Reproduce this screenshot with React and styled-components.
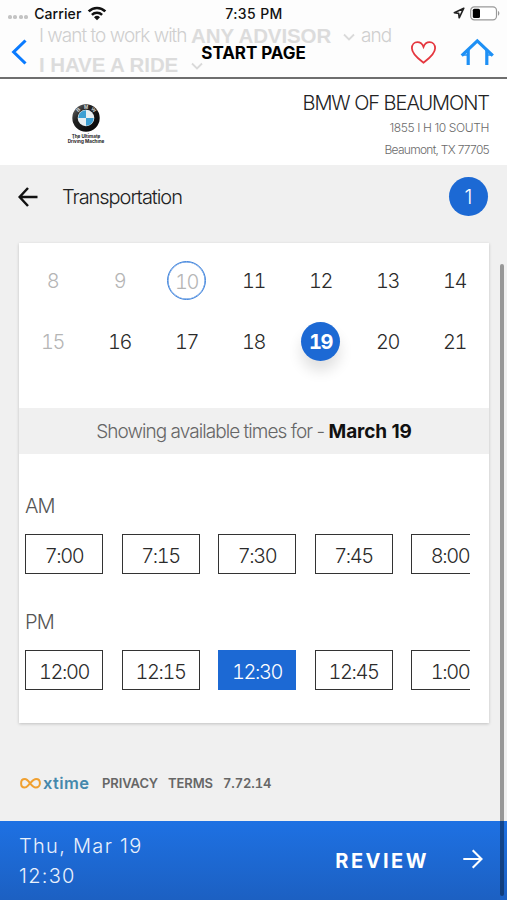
import styled, { createGlobalStyle, css } from "styled-components";

const days = [
  { day: 8, disabled: true },
  { day: 9, disabled: true },
  { day: 10, disabled: true, today: true },
  { day: 11 },
  { day: 12 },
  { day: 13 },
  { day: 14 },
  { day: 15, disabled: true },
  { day: 16 },
  { day: 17 },
  { day: 18 },
  { day: 19, selected: true },
  { day: 20 },
  { day: 21 },
];

const slots = [
  { label: "AM", times: ["7:00", "7:15", "7:30", "7:45", "8:00"] },
  { label: "PM", times: ["12:00", "12:15", "12:30", "12:45", "1:00"] },
];

const selectedTime = "12:30";

export default function App() {
  return (
    <Screen>
      <GlobalStyle />
      <TopBar>
        <Ghost aria-hidden="true">
          <GhostLine>
            <GhostText $width={148}>I want to work with</GhostText>
            <GhostStrong $width={141}>ANY ADVISOR</GhostStrong>
            <Chevron />
            <GhostText $width={30}>and</GhostText>
          </GhostLine>
          <GhostLine>
            <GhostStrong $width={141}>I HAVE A RIDE</GhostStrong>
            <Chevron />
          </GhostLine>
        </Ghost>
        <StatusBar>
          <Carrier>
            <SignalDots>
              <i />
              <i />
              <i />
              <i />
            </SignalDots>
            <span>Carrier</span>
            <WifiIcon />
          </Carrier>
          <Clock>7:35 PM</Clock>
          <StatusRight>
            <LocationIcon />
            <BatteryIcon />
          </StatusRight>
        </StatusBar>
        <NavRow>
          <BackIcon />
          <NavTitle>START PAGE</NavTitle>
          <NavActions>
            <HeartIcon />
            <HomeIcon />
          </NavActions>
        </NavRow>
      </TopBar>

      <Dealer>
        <Brand>
          <BrandLogo />
          <Slogan>
            The Ultimate
            <br />
            Driving Machine
          </Slogan>
        </Brand>
        <DealerInfo>
          <DealerName>BMW OF BEAUMONT</DealerName>
          <Address>1855 I H 10 SOUTH</Address>
          <Address>Beaumont, TX 77705</Address>
        </DealerInfo>
      </Dealer>

      <Content>
        <StepRow>
          <ArrowIcon />
          <StepTitle>Transportation</StepTitle>
          <StepBadge>1</StepBadge>
        </StepRow>
        <Card>
          <Calendar>
            {days.map(({ day, ...state }) => (
              <DayCell key={day}>
                <Day
                  $disabled={state.disabled}
                  $today={state.today}
                  $selected={state.selected}
                >
                  {day}
                </Day>
              </DayCell>
            ))}
          </Calendar>
          <Showing>
            <ShowingText>Showing available times for - </ShowingText>
            <b>March 19</b>
          </Showing>
          <Slots>
            {slots.map(({ label, times }) => (
              <SlotGroup key={label}>
                <SlotLabel>{label}</SlotLabel>
                <SlotList>
                  {times.map((time) => (
                    <Slot key={time} $selected={time === selectedTime}>
                      {time}
                    </Slot>
                  ))}
                </SlotList>
              </SlotGroup>
            ))}
          </Slots>
        </Card>
        <Footer>
          <XtimeLogo>
            <LoopIcon />
            <span>xtime</span>
          </XtimeLogo>
          <FooterText>PRIVACY</FooterText>
          <FooterText>TERMS</FooterText>
          <FooterText>7.72.14</FooterText>
        </Footer>
      </Content>

      <BottomBar>
        <Summary>
          <div>Thu, Mar 19</div>
          <div>12:30</div>
        </Summary>
        <Review>REVIEW</Review>
        <NextIcon />
      </BottomBar>
      <ScrollThumb />
    </Screen>
  );
}

function Chevron() {
  return (
    <svg width="14" height="10" viewBox="0 0 14 10" fill="none">
      <path d="M2 2.5 7 7.5 12 2.5" stroke="#dadada" strokeWidth="1.8" />
    </svg>
  );
}

function WifiIcon() {
  return (
    <svg width="20" height="15" viewBox="0 0 20 15" fill="none" stroke="#111">
      <path d="M1.7 5.4a11.8 11.8 0 0 1 16.6 0" strokeWidth="2.7" />
      <path d="M4.9 8.8a7.3 7.3 0 0 1 10.2 0" strokeWidth="2.5" />
      <path d="M7 11.2a4.3 4.3 0 0 1 6 0L10 14.3z" fill="#111" stroke="none" />
    </svg>
  );
}

function LocationIcon() {
  return (
    <svg width="12" height="12" viewBox="0 0 12 12" fill="none">
      <path
        d="M10.8 1.2 1.3 5.7l4.4.7.5 4.4z"
        stroke="#222"
        strokeWidth="1.6"
        strokeLinejoin="round"
      />
    </svg>
  );
}

function BatteryIcon() {
  return (
    <svg width="30" height="15" viewBox="0 0 30 15">
      <rect x=".7" y=".9" width="25.8" height="12.9" rx="3.6" fill="#fff" stroke="#999" strokeWidth="1.2" />
      <rect x="2.8" y="2.8" width="7.2" height="9.2" rx="1.5" fill="#000" />
      <path d="M28 5.1c1.8.7 1.8 4 0 4.7z" fill="#999" />
    </svg>
  );
}

function BackIcon() {
  return (
    <svg width="16" height="26" viewBox="0 0 16 26" fill="none">
      <path d="M14.5 1.5 2.7 13l11.8 11.5" stroke="#0a7bff" strokeWidth="3.1" />
    </svg>
  );
}

function HeartIcon() {
  return (
    <svg width="26" height="23" viewBox="0 0 26 23" fill="none">
      <path
        d="M13.5 21.7C9.9 18.9 1.9 13.5 1.9 7.3c0-3.7 2.5-6.1 5.5-6.1 2.9 0 5 1.8 6.1 4.6 1.1-2.8 3.2-4.6 6.1-4.6 3 0 5.5 2.4 5.5 6.1 0 6.2-8 11.6-11.6 14.4z"
        stroke="#e5373f"
        strokeWidth="1.8"
      />
    </svg>
  );
}

function HomeIcon() {
  return (
    <svg width="34" height="28" viewBox="0 0 34 28" fill="none" stroke="#1e90f5">
      <path d="M1.7 17.7 17.3 2.9l15.500 14.800" strokeWidth="3.2" />
      <path d="M8.200 12v15M26.800 12v15" strokeWidth="3.2" />
      <path d="M3 17h5M26.500 17h5" strokeWidth="1.500" />
    </svg>
  );
}

function BrandLogo() {
  return (
    <svg width="28" height="28" viewBox="0 0 28 28">
      <defs>
        <linearGradient id="rim" x1="0" y1="0" x2="1" y2="1">
          <stop offset="0" stopColor="#777" />
          <stop offset=".35" stopColor="#222" />
          <stop offset="1" stopColor="#000" />
        </linearGradient>
      </defs>
      <circle cx="14" cy="14" r="13.7" fill="url(#rim)" />
      <circle cx="14" cy="14" r="8.3" fill="#e9eff2" />
      <path d="M14 14V6.3A7.7 7.7 0 0 0 6.3 14z" fill="#3d9fd3" />
      <path d="M14 14v7.7a7.7 7.7 0 0 0 7.7-7.7z" fill="#3d9fd3" />
      <g fill="#ddd" fontFamily="Liberation Sans, sans-serif" fontSize="5" fontWeight="700" textAnchor="middle">
        <text x="6.5" y="7.5" transform="rotate(-40 6.5 6)">B</text>
        <text x="14" y="4.9">M</text>
        <text x="21.5" y="7.5" transform="rotate(40 21.5 6)">W</text>
      </g>
    </svg>
  );
}

function ArrowIcon() {
  return (
    <svg width="20" height="20" viewBox="0 0 20 20" fill="none" stroke="#111">
      <path d="M10 1 1.6 10l8.400 9M1.800 10h17.700" strokeWidth="2.500" />
    </svg>
  );
}

function NextIcon() {
  return (
    <svg width="20" height="20" viewBox="0 0 20 20" fill="none" stroke="#fff">
      <path d="M9.7 1.2 18.5 10l-8.8 8.8M18.3 10H.3" strokeWidth="2.1" />
    </svg>
  );
}

function LoopIcon() {
  return (
    <svg width="21" height="12" viewBox="0 0 21 12" fill="none">
      <path
        d="M11 5.2 8 8.6C6.600 10.200 5.600 10.600 4.600 10.600 2.500 10.600 1.100 8.700 1.100 6.300 1.100 3.900 2.600 2.100 4.900 2.100c4.100 0 6.200 8.500 10.800 8.500 2.500 0 4.200-1.900 4.200-4.300 0-2.500-1.600-4.200-3.800-4.200-1.900 0-3.100 1-5.100 3.300"
        stroke="#f0a030"
        strokeWidth="2"
      />
    </svg>
  );
}

const GlobalStyle = createGlobalStyle`
  * {
    box-sizing: border-box;
  }
  body {
    margin: 0;
    background: #f0f0f0;
    font-family: Inter, "Liberation Sans", sans-serif;
    color: #333;
  }
  svg {
    display: block;
    flex-shrink: 0;
  }
`;

const Screen = styled.div`
  position: relative;
  display: flex;
  flex-direction: column;
  width: 507px;
  height: 900px;
  overflow: hidden;
`;

const TopBar = styled.header`
  position: relative;
  height: 79px;
  background: #fdfdfd;
  border-bottom: 2px solid #6e6e6e;
`;

/* page content showing through the translucent bar */
const Ghost = styled.div`
  position: absolute;
  top: 21px;
  left: 39px;
  color: #cfcfcf;
`;

const GhostLine = styled.div`
  display: flex;
  align-items: center;
  height: 29px;
  svg {
    margin: 2px 5px 0 10px;
  }
`;

const GhostText = styled.span`
  width: ${({ $width }) => $width}px;
  margin-right: 4px;
  font-size: 19px;
  font-weight: 300;
  letter-spacing: -0.98px;
  white-space: nowrap;
`;

const GhostStrong = styled.span`
  width: ${({ $width }) => $width}px;
  font-family: "Liberation Sans", Arial, sans-serif;
  font-size: 20.5px;
  font-weight: 700;
  letter-spacing: -0.1px;
  color: #dcdcdc;
  white-space: nowrap;
`;

const StatusBar = styled.div`
  position: relative;
  display: grid;
  grid-template-columns: 1fr auto 1fr;
  align-items: center;
  height: 26px;
  padding: 0 7px 0 8px;
  font-size: 14px;
  font-weight: 500;
  color: #111;
`;

const Carrier = styled.div`
  display: flex;
  align-items: center;
  gap: 6px;
  span {
    letter-spacing: 0.1px;
  }
`;

const SignalDots = styled.div`
  display: flex;
  gap: 1.8px;
  margin-top: 8px;
  i {
    width: 3.7px;
    height: 3.7px;
    border-radius: 50%;
    background: #c4c4c4;
  }
`;

const Clock = styled.div`
  letter-spacing: 0.4px;
`;

const StatusRight = styled.div`
  display: flex;
  justify-content: flex-end;
  align-items: center;
  gap: 5px;
`;

const NavRow = styled.div`
  position: relative;
  display: grid;
  grid-template-columns: 1fr auto 1fr;
  align-items: center;
  height: 52px;
  padding: 0 13px 0 11px;
`;

const NavTitle = styled.h1`
  margin: 2px -2px 0 0;
  font-size: 17px;
  font-weight: 700;
  letter-spacing: -0.05px;
  color: #000;
`;

const NavActions = styled.div`
  display: flex;
  justify-content: flex-end;
  align-items: center;
  gap: 24px;
`;

const Dealer = styled.section`
  display: flex;
  justify-content: space-between;
  height: 86px;
  padding: 0 18px 0 66px;
  background: #fff;
`;

const Brand = styled.div`
  display: flex;
  flex-direction: column;
  align-items: center;
  width: 40px;
  padding-top: 25px;
`;

const Slogan = styled.div`
  margin-top: 2px;
  font-size: 4.6px;
  font-weight: 700;
  line-height: 5px;
  text-align: center;
  white-space: nowrap;
  color: #222;
`;

const DealerInfo = styled.div`
  padding-top: 11px;
  text-align: right;
`;

const DealerName = styled.div`
  height: 27px;
  font-size: 20px;
  font-weight: 300;
  line-height: 27px;
  letter-spacing: -1.05px;
  color: #222;
`;

const Address = styled.div`
  height: 22px;
  font-size: 12px;
  font-weight: 300;
  line-height: 22px;
  letter-spacing: -0.38px;
  color: #6b6b6b;

  & + & {
    letter-spacing: -0.72px;
  }
`;

const Content = styled.main`
  flex: 1;
  padding: 0 18px 0 19px;
  background: #f0f0f0;
`;

const StepRow = styled.div`
  display: flex;
  align-items: center;
  height: 78px;
  margin: 0 1px 0 -1px;
  padding-bottom: 15px;
`;

const StepTitle = styled.h2`
  flex: 1;
  margin: 0 0 0 24px;
  font-size: 20px;
  font-weight: 300;
  letter-spacing: -1.05px;
  color: #222;
`;

const StepBadge = styled.div`
  display: flex;
  justify-content: center;
  align-items: center;
  width: 39px;
  height: 39px;
  border-radius: 50%;
  background: #1c69d4;
  font-size: 20px;
  font-weight: 300;
  color: #fff;
`;

const Card = styled.section`
  width: 470px;
  height: 480px;
  background: #fff;
  box-shadow: 0 1px 3px rgba(0, 0, 0, 0.2);
`;

const Calendar = styled.div`
  display: grid;
  grid-template-columns: repeat(7, 67px);
  grid-auto-rows: 61px;
  height: 165px;
  padding-top: 7px;
`;

const DayCell = styled.div`
  display: flex;
  justify-content: center;
  align-items: center;
`;

const Day = styled.div`
  display: flex;
  justify-content: center;
  align-items: center;
  width: 39px;
  height: 39px;
  border-radius: 50%;
  font-size: 20px;
  font-weight: 300;
  font-variant-numeric: tabular-nums;
  letter-spacing: -1.5px;
  color: ${({ $disabled }) => ($disabled ? "#b5b5b5" : "#2b2b2b")};

  ${({ $today }) =>
    $today &&
    css`
      padding-top: 2px;
      border: 1.5px solid #3f83dc;
      box-shadow: inset 0 0 0 0.5px #3f83dc;
    `}

  ${({ $selected }) =>
    $selected &&
    css`
      background: #1c69d4;
      box-shadow: 0 10px 14px rgba(0, 0, 0, 0.12);
      font-weight: 700;
      color: #fff;
    `}
`;

const Showing = styled.div`
  display: flex;
  justify-content: center;
  align-items: center;
  height: 46px;
  background: #f0f0f0;
  font-size: 19px;
  white-space: pre;
  b {
    font-weight: 700;
    letter-spacing: -0.1px;
    color: #111;
  }
`;

const ShowingText = styled.span`
  font-weight: 300;
  letter-spacing: -0.95px;
  color: #666;
`;

const Slots = styled.div`
  padding: 34px 19px 0 6px;
`;

const SlotGroup = styled.div`
  height: 116px;
`;

const SlotLabel = styled.div`
  height: 46px;
  font-size: 20px;
  font-weight: 300;
  line-height: 36px;
  letter-spacing: -0.9px;
  color: #555;
`;

const SlotList = styled.div`
  display: flex;
  gap: 18.5px;
  overflow: hidden;
`;

const Slot = styled.div`
  display: flex;
  flex-shrink: 0;
  justify-content: center;
  align-items: center;
  width: 78px;
  height: 40px;
  padding-top: 4px;
  border: 1.5px solid ${({ $selected }) => ($selected ? "#1c69d4" : "#333")};
  background: ${({ $selected }) => ($selected ? "#1c69d4" : "#fff")};
  font-size: 20px;
  font-weight: 300;
  font-variant-numeric: tabular-nums;
  letter-spacing: -1.4px;
  color: ${({ $selected }) => ($selected ? "#fff" : "#2b2b2b")};
`;

const Footer = styled.footer`
  display: flex;
  align-items: center;
  height: 98px;
  padding-top: 22px;
`;

const XtimeLogo = styled.div`
  display: flex;
  align-items: center;
  width: 73px;
  margin-right: 10px;
  padding-left: 1px;
  span {
    margin-left: 2px;
    font-size: 16.5px;
    font-weight: 600;
    line-height: 18px;
    letter-spacing: 0.4px;
    color: #4588ac;
  }
`;

const FooterText = styled.span`
  margin-right: 10px;
  font-size: 13px;
  font-weight: 600;
  font-variant-numeric: tabular-nums;
  letter-spacing: -0.1px;
  color: #666;
`;

const BottomBar = styled.div`
  display: flex;
  align-items: center;
  height: 79px;
  padding: 0 24px 3px 19px;
  background: linear-gradient(#1e71e3, #1c60c2);
  color: #fff;
`;

const Summary = styled.div`
  flex: 1;
  padding-top: 3px;
  font-size: 20px;
  font-weight: 300;
  line-height: 30px;
  letter-spacing: 1.3px;
  color: #eaf1fc;
`;

const Review = styled.div`
  margin: 4px 34px 0 0;
  font-size: 20px;
  font-weight: 700;
  letter-spacing: 2.5px;
`;

const ScrollThumb = styled.div`
  position: absolute;
  top: 264px;
  left: 500px;
  width: 4px;
  height: 632px;
  border-radius: 2px;
  background: rgba(0, 0, 0, 0.37);
`;
